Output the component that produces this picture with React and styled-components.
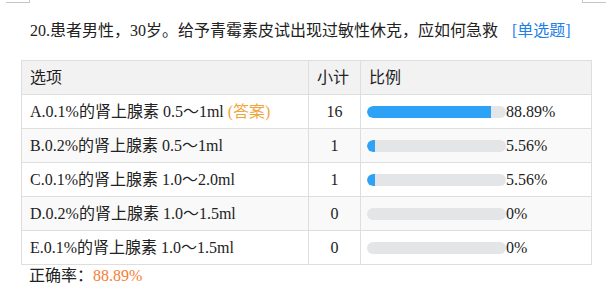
import React from 'react';
import styled, { createGlobalStyle } from 'styled-components';

const GlobalStyle = createGlobalStyle`
  html, body {
    margin: 0;
    padding: 0;
    background: #fff;
  }
  body {
    font-family: "Liberation Serif", "Noto Sans CJK SC", serif;
    font-size: 16px;
    color: #222;
  }
`;

const Page = styled.div`
  position: relative;
  width: 611px;
  height: 292px;
  overflow: hidden;
`;

const Corner = styled.span(({ side }) => ({
  position: 'absolute',
  top: 0,
  width: 23,
  height: 2,
  borderBottom: '1px solid #c6c6c6',
  [side === 'left' ? 'borderRight' : 'borderLeft']: '1px solid #c6c6c6',
  [side]: side === 'left' ? 6 : 5,
}));

const Title = styled.div`
  padding: 19px 0 0 30px;
  line-height: 24px;
  margin-bottom: 17px;
  white-space: nowrap;
`;

const Kind = styled.span`
  color: #1f80e8;
  margin-left: 14px;
`;

const Table = styled.table`
  margin-left: 21px;
  width: 571px;
  border-collapse: collapse;
  table-layout: fixed;
`;

const Head = styled.th`
  height: 33px;
  padding: 0 8px;
  background: #f2f2f2;
  border: 1px solid #dedede;
  font-weight: normal;
  text-align: left;
  line-height: 20px;
`;

const Row = styled.tr`
  background: ${({ striped }) => (striped ? '#f9f9f9' : '#fff')};
`;

const Cell = styled.td`
  height: 33px;
  padding: 0 ${({ pad = 8 }) => pad}px;
  border: 1px solid #dedede;
  text-align: ${({ center }) => (center ? 'center' : 'left')};
  line-height: 20px;
  white-space: nowrap;
`;

const Answer = styled.span`
  color: #f0a53c;
`;

const Ratio = styled.div`
  display: flex;
  align-items: center;
`;

const Track = styled.div`
  width: 139px;
  height: 12px;
  border-radius: 6px;
  background: #e4e5e7;
  overflow: hidden;
`;

const Fill = styled.div`
  height: 100%;
  background: #2ea2f7;
  border-radius: 6px 0 0 6px;
`;

const Footer = styled.div`
  padding-left: 29px;
  line-height: 22px;
`;

const Rate = styled.span`
  color: #f97c30;
`;

const options = [
  { label: 'A.0.1%的肾上腺素 0.5～1ml', count: 16, pct: 88.89, answer: true },
  { label: 'B.0.2%的肾上腺素 0.5～1ml', count: 1, pct: 5.56 },
  { label: 'C.0.1%的肾上腺素 1.0～2.0ml', count: 1, pct: 5.56 },
  { label: 'D.0.2%的肾上腺素 1.0～1.5ml', count: 0, pct: 0 },
  { label: 'E.0.1%的肾上腺素 1.0～1.5ml', count: 0, pct: 0 },
];

export default function App() {
  return (
    <Page>
      <GlobalStyle />
      <Corner side="left" />
      <Corner side="right" />
      <Title>
        20.患者男性，30岁。给予青霉素皮试出现过敏性休克，应如何急救
        <Kind>[单选题]</Kind>
      </Title>
      <Table>
        <colgroup>
          <col style={{ width: 287 }} />
          <col style={{ width: 52 }} />
          <col />
        </colgroup>
        <thead>
          <tr>
            <Head>选项</Head>
            <Head>小计</Head>
            <Head>比例</Head>
          </tr>
        </thead>
        <tbody>
          {options.map((o, i) => (
            <Row key={o.label} striped={i % 2 === 1}>
              <Cell>
                {o.label}
                {o.answer && <Answer> (答案)</Answer>}
              </Cell>
              <Cell center pad={0}>{o.count}</Cell>
              <Cell pad={6}>
                <Ratio>
                  <Track>
                    <Fill style={{ width: `${o.pct}%` }} />
                  </Track>
                  {o.pct}%
                </Ratio>
              </Cell>
            </Row>
          ))}
        </tbody>
      </Table>
      <Footer>
        正确率：<Rate>88.89%</Rate>
      </Footer>
    </Page>
  );
}
